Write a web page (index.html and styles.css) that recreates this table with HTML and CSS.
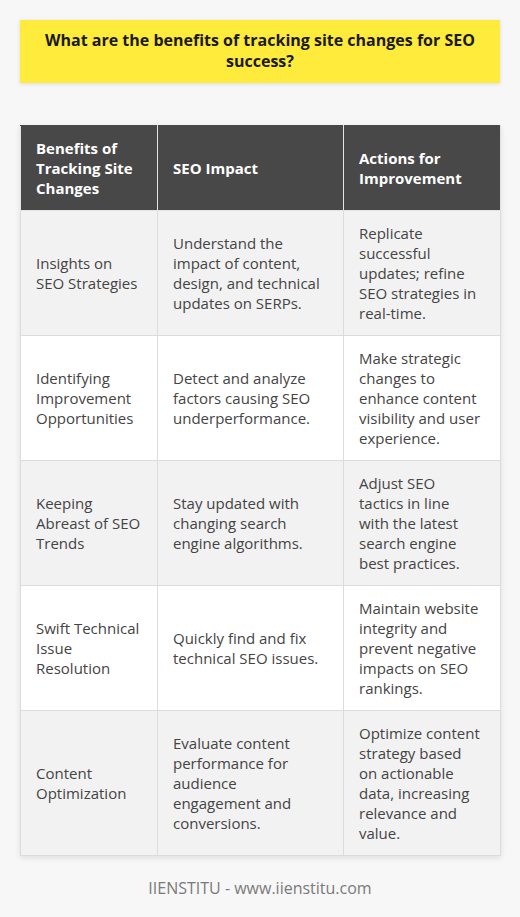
FILE: index.html
```html
<!DOCTYPE html>
<html>
<head>
<meta charset="utf-8">
<link rel="stylesheet" href="styles.css">
</head>
<body>
<div class="page">
  <div class="title">What are the benefits of tracking site changes for SEO success?</div>
  <table class="grid">
    <colgroup>
      <col class="c1"><col class="c2"><col class="c3">
    </colgroup>
    <thead>
      <tr>
        <th>Benefits of Tracking Site Changes</th>
        <th>SEO Impact</th>
        <th>Actions for Improvement</th>
      </tr>
    </thead>
    <tbody>
      <tr>
        <td>Insights on SEO Strategies</td>
        <td>Understand the impact of content, design, and technical updates on SERPs.</td>
        <td>Replicate successful updates; refine SEO strategies in real-time.</td>
      </tr>
      <tr>
        <td>Identifying Improvement Opportunities</td>
        <td>Detect and analyze factors causing SEO underperformance.</td>
        <td>Make strategic changes to enhance content visibility and user experience.</td>
      </tr>
      <tr>
        <td>Keeping Abreast of SEO Trends</td>
        <td>Stay updated with changing search engine algorithms.</td>
        <td>Adjust SEO tactics in line with the latest search engine best practices.</td>
      </tr>
      <tr>
        <td>Swift Technical Issue Resolution</td>
        <td>Quickly find and fix technical SEO issues.</td>
        <td>Maintain website integrity and prevent negative impacts on SEO rankings.</td>
      </tr>
      <tr>
        <td>Content Optimization</td>
        <td>Evaluate content performance for audience engagement and conversions.</td>
        <td>Optimize content strategy based on actionable data, increasing relevance and value.</td>
      </tr>
    </tbody>
  </table>
  <div class="footer">IIENSTITU - www.iienstitu.com</div>
</div>
</body>
</html>
```
FILE: styles.css
```css
html, body {
  margin: 0;
  padding: 0;
  background: #f7f7f7;
}
body {
  font-family: "Open Sans", "Liberation Sans", sans-serif;
  color: #444;
}
.page {
  padding: 20px 20px 0;
}
.title {
  background: #ffeb3b;
  color: #1a1a1a;
  font-weight: 700;
  font-size: 16px;
  line-height: 21px;
  text-align: center;
  padding: 10px 10px 11px;
  box-shadow: 0 1px 4px rgba(0,0,0,0.12);
}
.grid {
  margin-top: 42px;
  width: 480px;
  border-collapse: collapse;
  table-layout: fixed;
  font-size: 15px;
  line-height: 20px;
  box-shadow: 0 2px 6px rgba(0,0,0,0.10);
}
.c1 { width: 137px; }
.c2 { width: 186px; }
.c3 { width: 157px; }
.grid th {
  background: #484848;
  color: #fff;
  font-weight: 700;
  text-align: left;
  padding: 12px 15px;
  border: 1px solid #e4e4e4;
  border-top-color: #484848;
  vertical-align: middle;
}
.grid td {
  padding: 12px 15px;
  border: 1px solid #dcdcdc;
  vertical-align: middle;
}
.grid td:last-child {
  padding-right: 18px;
}
.grid tbody tr:nth-child(odd) td { background: #f2f2f2; }
.grid tbody tr:nth-child(even) td { background: #fff; }
.footer {
  text-align: center;
  color: #7a7a7a;
  font-size: 16px;
  line-height: 20px;
  padding-top: 22px;
}
```
